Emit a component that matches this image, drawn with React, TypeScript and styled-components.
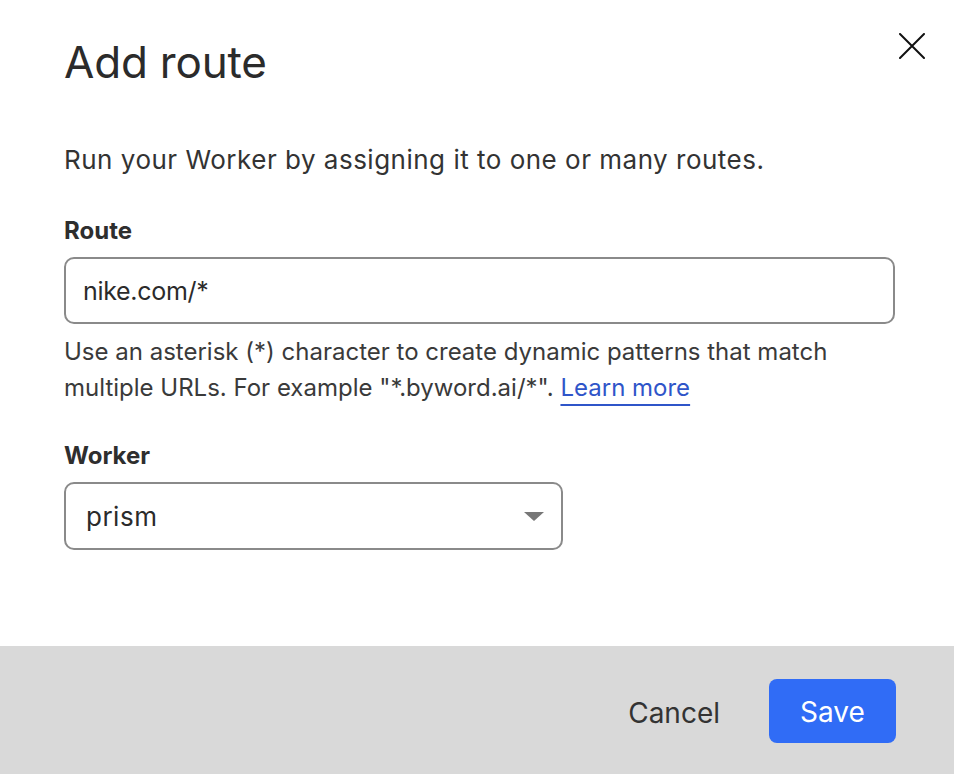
import styled, { createGlobalStyle } from 'styled-components'

const GlobalStyle = createGlobalStyle`
  html, body {
    margin: 0;
    padding: 0;
    background: #ffffff;
  }
  body {
    font-family: Inter, "Liberation Sans", Arial, sans-serif;
    color: #333333;
  }
`

const App = () => {
  return (
    <>
      <GlobalStyle />
      <Dialog>
        <Body>
          <Header>
            <Title>Add route</Title>
            <CloseButton aria-label='Close'>
              <svg width='26' height='26' viewBox='0 0 26 26'>
                <path d='M1 1 L25 25 M25 1 L1 25' stroke='#111' strokeWidth='2' strokeLinecap='round' />
              </svg>
            </CloseButton>
          </Header>
          <Intro>Run your Worker by assigning it to one or many routes.</Intro>
          <Field>
            <Label>Route</Label>
            <TextInput defaultValue='nike.com/*' />
            <Help>
              Use an asterisk (*) character to create dynamic patterns that match multiple URLs. For example "*.byword.ai/*".{' '}
              <HelpLink href='#'>Learn more</HelpLink>
            </Help>
          </Field>
          <Field>
            <Label>Worker</Label>
            <Select>
              <span>prism</span>
              <Caret />
            </Select>
          </Field>
        </Body>
        <Footer>
          <CancelButton>Cancel</CancelButton>
          <SaveButton>Save</SaveButton>
        </Footer>
      </Dialog>
    </>
  )
}

const Dialog = styled.div`
  display: flex;
  flex-direction: column;
  width: 954px;
  height: 774px;
  background: #ffffff;
`

const Body = styled.div`
  flex: 1;
  display: flex;
  flex-direction: column;
  padding: 28px 59px 0 64px;
`

const Header = styled.div`
  display: flex;
  justify-content: space-between;
  align-items: flex-start;
`

const Title = styled.h1`
  margin: 0;
  font-size: 44px;
  font-weight: 400;
  line-height: 68px;
  color: #2b2b2b;
  letter-spacing: -0.2px;
`

const CloseButton = styled.button`
  border: none;
  background: transparent;
  padding: 0;
  margin-top: 5px;
  margin-right: -30px;
  cursor: pointer;
  display: flex;
`

const Intro = styled.p`
  margin: 46px 0 0;
  font-size: 26px;
  line-height: 36px;
  letter-spacing: 0.5px;
  color: #333;
`

const Field = styled.div`
  display: flex;
  flex-direction: column;
  margin-top: 37px;

  & + & {
    margin-top: 34px;
  }
`

const Label = styled.label`
  font-size: 24px;
  font-weight: 700;
  line-height: 32px;
  color: #2e2e2e;
  margin-bottom: 10px;
`

const TextInput = styled.input`
  box-sizing: border-box;
  width: 831px;
  height: 67px;
  border: 2px solid #8a8a8a;
  border-radius: 10px;
  padding: 0 17px;
  font-family: inherit;
  font-size: 25px;
  letter-spacing: -0.3px;
  color: #2b2b2b;
  outline: none;
  background: #fff;
`

const Help = styled.p`
  margin: 10px 0 0;
  font-size: 24px;
  line-height: 36px;
  color: #3a3a3a;
  max-width: 780px;
`

const HelpLink = styled.a`
  color: #2f55c9;
  text-decoration: underline;
  text-decoration-thickness: 2px;
  text-underline-offset: 8px;
`

const Select = styled.div`
  box-sizing: border-box;
  width: 499px;
  height: 68px;
  border: 2px solid #8a8a8a;
  border-radius: 10px;
  padding: 0 17px 0 20px;
  display: flex;
  align-items: center;
  justify-content: space-between;
  font-size: 26px;
  letter-spacing: 0.5px;
  color: #2b2b2b;
`

const Caret = styled.span`
  width: 0;
  height: 0;
  border-left: 10px solid transparent;
  border-right: 10px solid transparent;
  border-top: 9px solid #777;
`

const Footer = styled.div`
  height: 128px;
  background: #d9d9d9;
  display: flex;
  align-items: center;
  justify-content: flex-end;
  gap: 49px;
  padding: 2px 58px 0 0;
  box-sizing: border-box;
`

const CancelButton = styled.button`
  border: none;
  background: transparent;
  font-family: inherit;
  font-size: 28px;
  color: #333;
  padding: 3px 0 0;
  cursor: pointer;
`

const SaveButton = styled.button`
  width: 127px;
  height: 64px;
  border: none;
  border-radius: 8px;
  background: #306cf6;
  color: #ffffff;
  font-family: inherit;
  font-size: 28px;
  padding: 2px 0 0;
  cursor: pointer;
`

export default App
